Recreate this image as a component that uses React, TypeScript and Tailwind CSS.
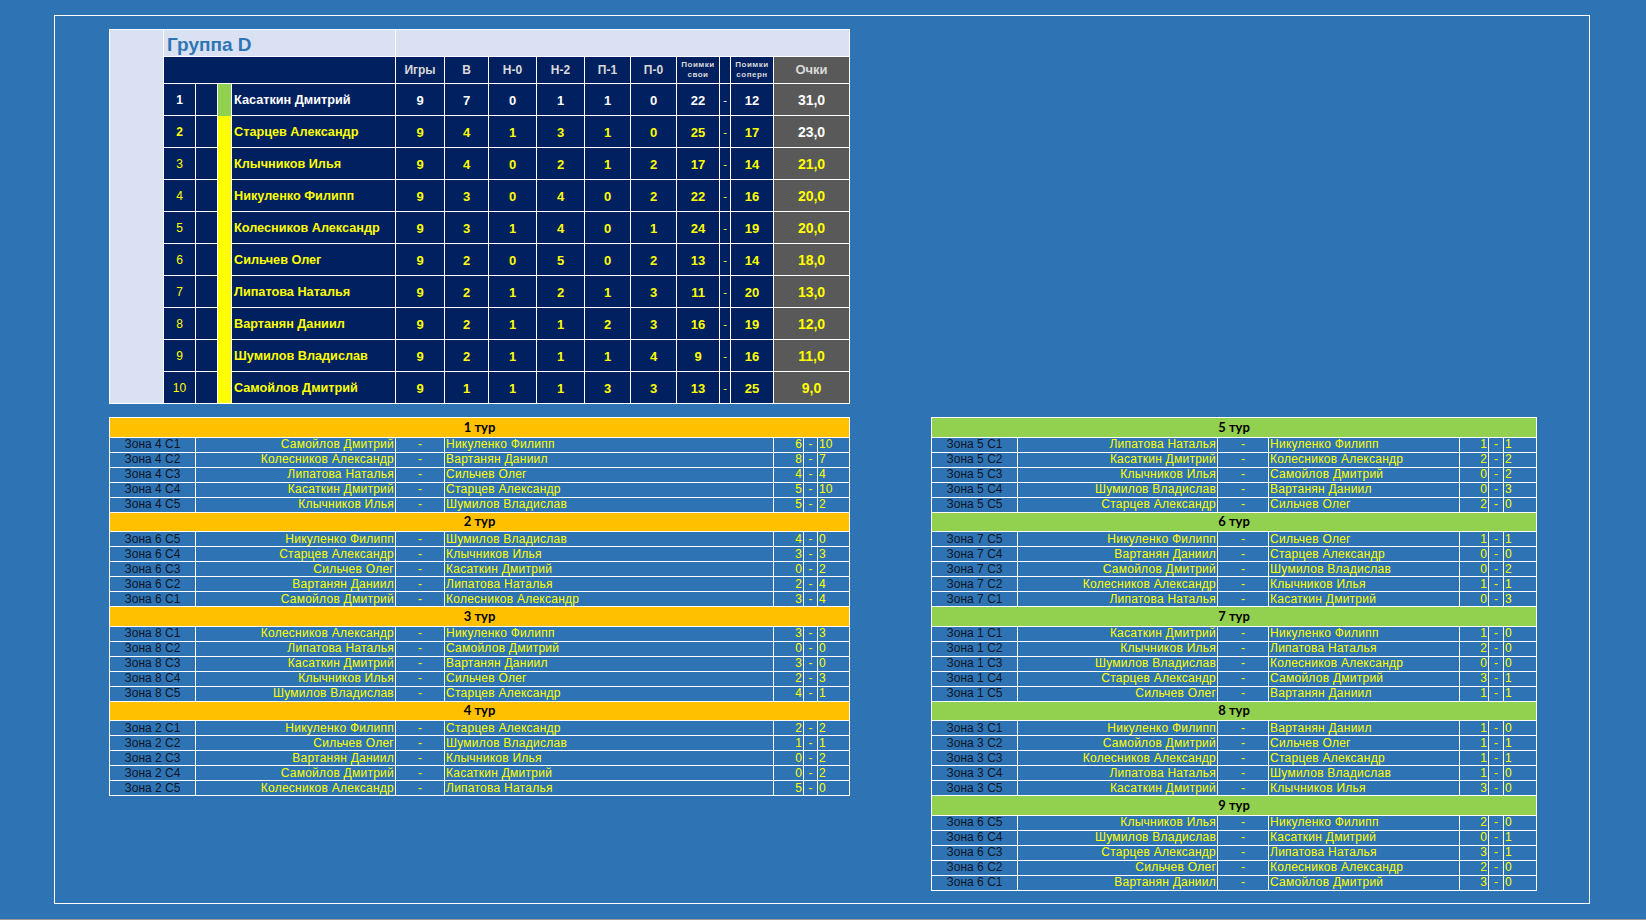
import React from "react";

type Player = { n: number; name: string; v: number[]; pts: string };

const players: Player[] = [
  { n: 1, name: "Касаткин Дмитрий", v: [9, 7, 0, 1, 1, 0, 22, 12], pts: "31,0" },
  { n: 2, name: "Старцев Александр", v: [9, 4, 1, 3, 1, 0, 25, 17], pts: "23,0" },
  { n: 3, name: "Клычников Илья", v: [9, 4, 0, 2, 1, 2, 17, 14], pts: "21,0" },
  { n: 4, name: "Никуленко Филипп", v: [9, 3, 0, 4, 0, 2, 22, 16], pts: "20,0" },
  { n: 5, name: "Колесников Александр", v: [9, 3, 1, 4, 0, 1, 24, 19], pts: "20,0" },
  { n: 6, name: "Сильчев Олег", v: [9, 2, 0, 5, 0, 2, 13, 14], pts: "18,0" },
  { n: 7, name: "Липатова Наталья", v: [9, 2, 1, 2, 1, 3, 11, 20], pts: "13,0" },
  { n: 8, name: "Вартанян Даниил", v: [9, 2, 1, 1, 2, 3, 16, 19], pts: "12,0" },
  { n: 9, name: "Шумилов Владислав", v: [9, 2, 1, 1, 1, 4, 9, 16], pts: "11,0" },
  { n: 10, name: "Самойлов Дмитрий", v: [9, 1, 1, 1, 3, 3, 13, 25], pts: "9,0" },
];

type Match = [string, string, string, number, number];
type Round = { title: string; games: Match[] };

const leftRounds: Round[] = [
  {
    title: "1 тур",
    games: [
      ["Зона 4 С1", "Самойлов Дмитрий", "Никуленко Филипп", 6, 10],
      ["Зона 4 С2", "Колесников Александр", "Вартанян Даниил", 8, 7],
      ["Зона 4 С3", "Липатова Наталья", "Сильчев Олег", 4, 4],
      ["Зона 4 С4", "Касаткин Дмитрий", "Старцев Александр", 5, 10],
      ["Зона 4 С5", "Клычников Илья", "Шумилов Владислав", 5, 2],
    ],
  },
  {
    title: "2 тур",
    games: [
      ["Зона 6 С5", "Никуленко Филипп", "Шумилов Владислав", 4, 0],
      ["Зона 6 С4", "Старцев Александр", "Клычников Илья", 3, 3],
      ["Зона 6 С3", "Сильчев Олег", "Касаткин Дмитрий", 0, 2],
      ["Зона 6 С2", "Вартанян Даниил", "Липатова Наталья", 2, 4],
      ["Зона 6 С1", "Самойлов Дмитрий", "Колесников Александр", 3, 4],
    ],
  },
  {
    title: "3 тур",
    games: [
      ["Зона 8 С1", "Колесников Александр", "Никуленко Филипп", 3, 3],
      ["Зона 8 С2", "Липатова Наталья", "Самойлов Дмитрий", 0, 0],
      ["Зона 8 С3", "Касаткин Дмитрий", "Вартанян Даниил", 3, 0],
      ["Зона 8 С4", "Клычников Илья", "Сильчев Олег", 2, 3],
      ["Зона 8 С5", "Шумилов Владислав", "Старцев Александр", 4, 1],
    ],
  },
  {
    title: "4 тур",
    games: [
      ["Зона 2 С1", "Никуленко Филипп", "Старцев Александр", 2, 2],
      ["Зона 2 С2", "Сильчев Олег", "Шумилов Владислав", 1, 1],
      ["Зона 2 С3", "Вартанян Даниил", "Клычников Илья", 0, 2],
      ["Зона 2 С4", "Самойлов Дмитрий", "Касаткин Дмитрий", 0, 2],
      ["Зона 2 С5", "Колесников Александр", "Липатова Наталья", 5, 0],
    ],
  },
];

const rightRounds: Round[] = [
  {
    title: "5 тур",
    games: [
      ["Зона 5 С1", "Липатова Наталья", "Никуленко Филипп", 1, 1],
      ["Зона 5 С2", "Касаткин Дмитрий", "Колесников Александр", 2, 2],
      ["Зона 5 С3", "Клычников Илья", "Самойлов Дмитрий", 0, 2],
      ["Зона 5 С4", "Шумилов Владислав", "Вартанян Даниил", 0, 3],
      ["Зона 5 С5", "Старцев Александр", "Сильчев Олег", 2, 0],
    ],
  },
  {
    title: "6 тур",
    games: [
      ["Зона 7 С5", "Никуленко Филипп", "Сильчев Олег", 1, 1],
      ["Зона 7 С4", "Вартанян Даниил", "Старцев Александр", 0, 0],
      ["Зона 7 С3", "Самойлов Дмитрий", "Шумилов Владислав", 0, 2],
      ["Зона 7 С2", "Колесников Александр", "Клычников Илья", 1, 1],
      ["Зона 7 С1", "Липатова Наталья", "Касаткин Дмитрий", 0, 3],
    ],
  },
  {
    title: "7 тур",
    games: [
      ["Зона 1 С1", "Касаткин Дмитрий", "Никуленко Филипп", 1, 0],
      ["Зона 1 С2", "Клычников Илья", "Липатова Наталья", 2, 0],
      ["Зона 1 С3", "Шумилов Владислав", "Колесников Александр", 0, 0],
      ["Зона 1 С4", "Старцев Александр", "Самойлов Дмитрий", 3, 1],
      ["Зона 1 С5", "Сильчев Олег", "Вартанян Даниил", 1, 1],
    ],
  },
  {
    title: "8 тур",
    games: [
      ["Зона 3 С1", "Никуленко Филипп", "Вартанян Даниил", 1, 0],
      ["Зона 3 С2", "Самойлов Дмитрий", "Сильчев Олег", 1, 1],
      ["Зона 3 С3", "Колесников Александр", "Старцев Александр", 1, 1],
      ["Зона 3 С4", "Липатова Наталья", "Шумилов Владислав", 1, 0],
      ["Зона 3 С5", "Касаткин Дмитрий", "Клычников Илья", 3, 0],
    ],
  },
  {
    title: "9 тур",
    games: [
      ["Зона 6 С5", "Клычников Илья", "Никуленко Филипп", 2, 0],
      ["Зона 6 С4", "Шумилов Владислав", "Касаткин Дмитрий", 0, 1],
      ["Зона 6 С3", "Старцев Александр", "Липатова Наталья", 3, 1],
      ["Зона 6 С2", "Сильчев Олег", "Колесников Александр", 2, 0],
      ["Зона 6 С1", "Вартанян Даниил", "Самойлов Дмитрий", 3, 0],
    ],
  },
];

const cell = "border border-white p-0";

const StandingsTable: React.FC = () => {
  const widths = [54, 32, 22, 14, 164, 49, 44, 48, 48, 46, 46, 43, 11, 43, 76];
  const heads = ["Игры", "В", "Н-0", "Н-2", "П-1", "П-0"];
  return (
    <table className="border-collapse table-fixed w-[740px] font-['Liberation_Sans',Arial,sans-serif]">
      <colgroup>
        {widths.map((w, i) => (
          <col key={i} style={{ width: w }} />
        ))}
      </colgroup>
      <tbody>
        <tr className="h-[27px]">
          <td rowSpan={12} className={`${cell} bg-[#D9E1F2]`} />
          <td
            colSpan={4}
            className={`${cell} bg-[#D9E1F2] pl-[3px] pt-[3px] text-[19px] font-bold text-[#2E75B6] leading-none`}
          >
            Группа D
          </td>
          <td colSpan={10} className={`${cell} bg-[#D9E1F2]`} />
        </tr>
        <tr className="h-[27px] bg-[#002060] text-[#D9D9D9] font-bold text-center">
          <td colSpan={4} className={cell} />
          {heads.map((h) => (
            <td key={h} className={`${cell} text-[12px]`}>
              {h}
            </td>
          ))}
          <td className={`${cell} text-[8px] leading-[10px] tracking-[0.5px]`}>
            Поимки
            <br />
            свои
          </td>
          <td className={cell} />
          <td className={`${cell} text-[8px] leading-[10px] tracking-[0.5px]`}>
            Поимки
            <br />
            соперн
          </td>
          <td className={`${cell} bg-[#595959] text-[13px]`}>Очки</td>
        </tr>
        {players.map((p, i) => {
          const color = i === 0 ? "text-white" : "text-[#FFFF00]";
          const ptsColor = i < 2 ? "text-white" : "text-[#FFFF00]";
          return (
            <tr key={p.n} className={`h-[32px] bg-[#002060] ${color}`}>
              <td className={`${cell} text-center text-[12px] ${i < 2 ? "font-bold" : ""}`}>{p.n}</td>
              <td className={cell} />
              {i === 0 && (
                <td className={`${cell} bg-[#92D050] [border-bottom-style:hidden]`} />
              )}
              {i === 1 && (
                <td rowSpan={9} className={`${cell} bg-[#FFFF00] [border-top-style:hidden]`} />
              )}
              <td className={`${cell} pl-[2px] pt-[2px] text-[12.7px] font-bold whitespace-nowrap`}>
                {p.name}
              </td>
              {p.v.slice(0, 7).map((x, k) => (
                <td key={k} className={`${cell} pt-[2px] text-center text-[13px] font-bold`}>
                  {x}
                </td>
              ))}
              <td className={`${cell} pt-[2px] text-center text-[11px]`}>-</td>
              <td className={`${cell} pt-[2px] text-center text-[13px] font-bold`}>{p.v[7]}</td>
              <td
                className={`${cell} pt-[2px] bg-[#595959] text-center text-[14px] font-bold ${ptsColor}`}
              >
                {p.pts}
              </td>
            </tr>
          );
        })}
      </tbody>
    </table>
  );
};

const RoundsTable: React.FC<{
  rounds: Round[];
  widths: number[];
  head: string;
}> = ({ rounds, widths, head }) => {
  const total = widths.reduce((a, b) => a + b, 0);
  return (
    <table
      className="border-collapse table-fixed font-['Liberation_Sans',Arial,sans-serif] text-[12px] leading-[13px]"
      style={{ width: total }}
    >
      <colgroup>
        {widths.map((w, i) => (
          <col key={i} style={{ width: w }} />
        ))}
      </colgroup>
      <tbody>
        {rounds.map((r) => (
          <React.Fragment key={r.title}>
            <tr className="h-[19.5px]">
              <td
                colSpan={7}
                className={`${cell} ${head} text-center font-['Lato',sans-serif] font-bold text-[13px] text-black`}
              >
                {r.title}
              </td>
            </tr>
            {r.games.map((g) => (
              <tr key={g[0]} className="h-[15px] text-[#FFFF00]">
                <td className={`${cell} text-center text-[#101426]`}>{g[0]}</td>
                <td className={`${cell} text-right pr-[1px] whitespace-nowrap tracking-[0.25px]`}>
                  {g[1]}
                </td>
                <td className={`${cell} text-center`}>-</td>
                <td className={`${cell} text-left pl-[1px] whitespace-nowrap tracking-[0.25px]`}>
                  {g[2]}
                </td>
                <td className={`${cell} text-right pr-[1px]`}>{g[3]}</td>
                <td className={`${cell} text-center`}>-</td>
                <td className={`${cell} text-left pl-[1px]`}>{g[4]}</td>
              </tr>
            ))}
          </React.Fragment>
        ))}
      </tbody>
    </table>
  );
};

export default function App() {
  return (
    <div className="w-[1646px] h-[920px] bg-[#2E74B5] border-b border-[#9a9a9a] pt-[15px] pl-[54px] overflow-hidden">
      <div className="w-[1536px] h-[889px] border border-white pl-[54px] pt-[13px]">
        <StandingsTable />
        <div className="flex items-start gap-[81px] mt-[13px]">
          <RoundsTable
            rounds={leftRounds}
            widths={[86, 200, 49, 329, 30, 14, 32]}
            head="bg-[#FFC000]"
          />
          <RoundsTable
            rounds={rightRounds}
            widths={[86, 200, 51, 191, 29, 15, 33]}
            head="bg-[#92D050]"
          />
        </div>
      </div>
    </div>
  );
}
